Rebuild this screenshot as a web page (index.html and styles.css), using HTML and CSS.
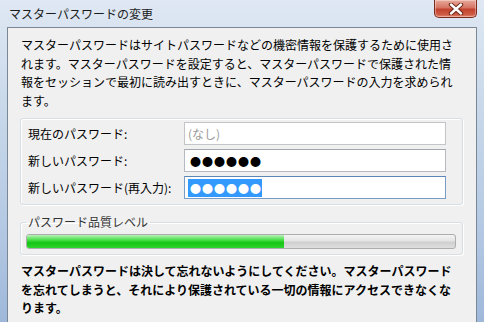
FILE: index.html
```html
<!DOCTYPE html>
<html lang="ja">

<head>
    <meta charset="utf-8">
    <title>マスターパスワードの変更</title>
    <link rel="stylesheet" href="styles.css">
</head>

<body>

    <div class="window">
        <div class="titlebar">
            <span class="title">マスターパスワードの変更</span>
            <div class="close">
                <svg width="16" height="12" viewBox="0 0 16 12">
                    <path d="M3 1.5 L13 10.5 M13 1.5 L3 10.5" stroke="#6b2418" stroke-width="4.4" stroke-linecap="round" />
                    <path d="M3 1.5 L13 10.5 M13 1.5 L3 10.5" stroke="#ffffff" stroke-width="2.4" stroke-linecap="round" />
                </svg>
            </div>
        </div>

        <div class="client">
            <p class="intro">マスターパスワードはサイトパスワードなどの機密情報を保護するために使用されます。マスターパスワードを設定すると、マスターパスワードで保護された情報をセッションで最初に読み出すときに、マスターパスワードの入力を求められます。</p>

            <div class="group fields">
                <div class="row">
                    <span class="label">現在のパスワード:</span>
                    <div class="field disabled">(なし)</div>
                </div>
                <div class="row">
                    <span class="label">新しいパスワード:</span>
                    <div class="field"><span class="dots">●●●●●●</span></div>
                </div>
                <div class="row">
                    <span class="label">新しいパスワード(再入力):</span>
                    <div class="field focused"><span class="dots selected">●●●●●●</span></div>
                </div>
            </div>

            <fieldset class="group quality">
                <legend>パスワード品質レベル</legend>
                <div class="meter">
                    <div class="meter-fill" style="width: 60%"></div>
                </div>
            </fieldset>

            <p class="warning">マスターパスワードは決して忘れないようにしてください。マスターパスワードを忘れてしまうと、それにより保護されている一切の情報にアクセスできなくなります。</p>
        </div>
    </div>

</body>

</html>
```

FILE: styles.css
```css
body {
    margin: 0;
    width: 484px;
    height: 322px;
    overflow: hidden;
    font-family: "Noto Sans CJK JP", "Noto Sans", sans-serif;
    font-size: 12px;
    color: #000;
}

.window {
    height: 322px;
    display: flex;
    flex-direction: column;
    background: linear-gradient(to bottom, #dfe8f3 0%, #cbdaeb 30%, #b4c9e3 70%, #9fb8da 100%);
}

.titlebar {
    height: 27px;
    display: flex;
    justify-content: space-between;
    align-items: flex-start;
    padding: 0 7px 0 9px;
    flex-shrink: 0;
}

.title {
    line-height: 27px;
    color: #1b1b1b;
}

.close {
    width: 43px;
    height: 18px;
    box-sizing: border-box;
    border: 1px solid #7d2a1f;
    border-top: none;
    border-radius: 0 0 5px 5px;
    background: linear-gradient(to bottom, #e9a99b 0%, #d67563 45%, #c2432f 55%, #cf5a44 85%, #e08a6f 100%);
    box-shadow: inset 0 0 0 1px rgba(255, 255, 255, 0.35);
    display: flex;
    justify-content: center;
    align-items: center;
}

.client {
    flex: 1;
    margin: 0 7px;
    background: #f0f0f0;
    border: 1px solid #7a8796;
    border-bottom: none;
}

.intro {
    width: 434px;
    margin: 8px 0 0 13px;
    line-height: 18.5px;
}

.group {
    margin: 8px 13px 0 12px;
    border: 1px solid #d5dfe5;
    border-radius: 3px;
    box-shadow: inset 1px 1px 0 #fff, 1px 1px 0 #fff;
}

.fields {
    padding: 3px 16px 5px 7px;
    display: flex;
    flex-direction: column;
    gap: 4px;
}

.row {
    display: flex;
    align-items: center;
}

.label {
    width: 156px;
    line-height: 16px;
}

.field {
    width: 262px;
    height: 23px;
    box-sizing: border-box;
    background: #fff;
    border: 1px solid #b6b9c0;
    border-top-color: #a3a6ad;
    padding: 0 3px;
    display: flex;
    align-items: center;
    line-height: 16px;
}

.field.disabled {
    color: #9a9a9a;
    border-color: #c2c4c8;
}

.field.focused {
    border-color: #7a9cc6;
    border-top-color: #5d86b8;
}

.dots {
    font-size: 11px;
    line-height: 18px;
    letter-spacing: 1px;
    padding-left: 2px;
}

.dots.selected {
    background: #3399ff;
    color: #fff;
}

.quality {
    margin-top: 9px;
    padding: 4px 6px 5px 5px;
    min-inline-size: 0;
}

.quality legend {
    padding: 0 2px;
    line-height: 16px;
    color: #333;
}

.meter {
    height: 15px;
    box-sizing: border-box;
    border: 1px solid #adadad;
    border-radius: 3px;
    background: linear-gradient(to bottom, #f4f4f4 0%, #e4e4e4 45%, #cfcfcf 55%, #dedede 100%);
    overflow: hidden;
}

.meter-fill {
    height: 100%;
    background: linear-gradient(to bottom, #b9f3b9 0%, #44dd44 40%, #14c514 60%, #2fd42f 100%);
}

.warning {
    width: 434px;
    margin: 7px 0 0 13px;
    line-height: 18.5px;
    font-weight: bold;
}
```
